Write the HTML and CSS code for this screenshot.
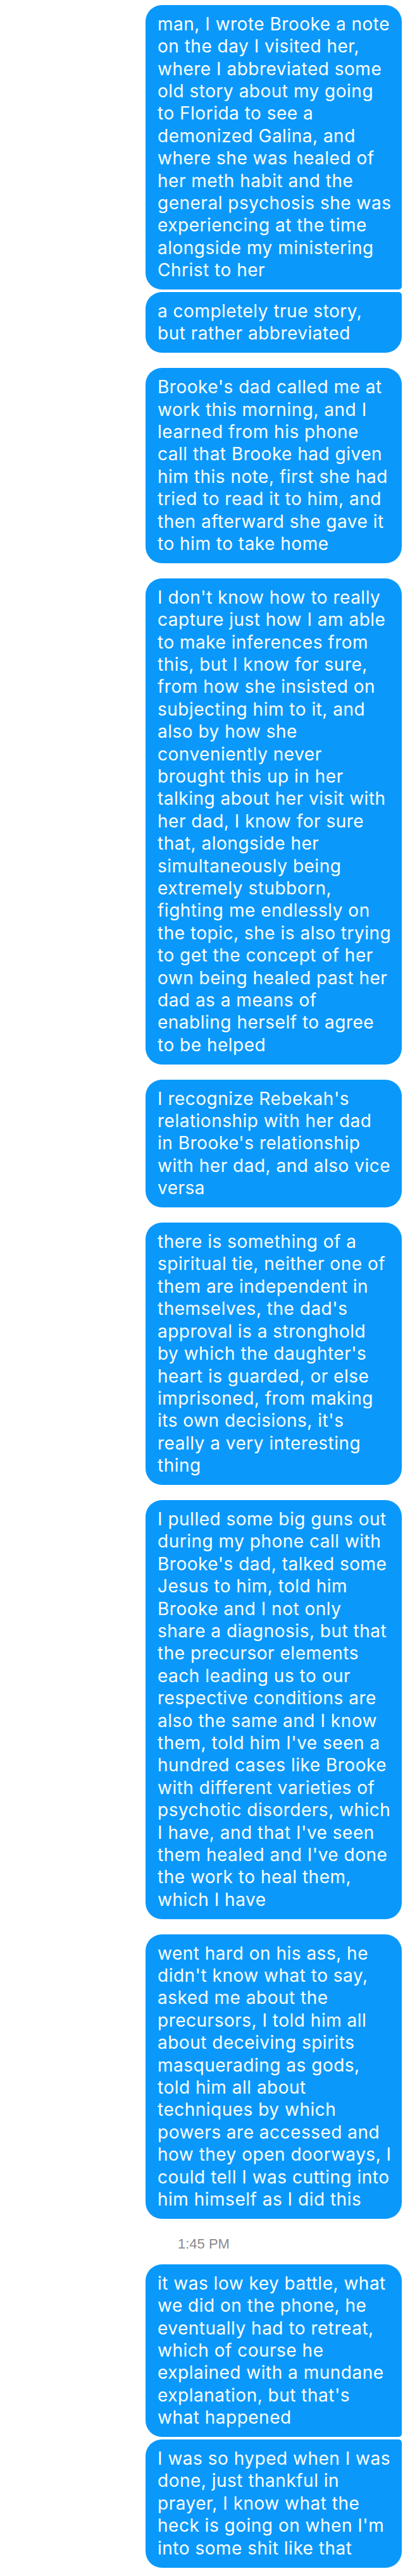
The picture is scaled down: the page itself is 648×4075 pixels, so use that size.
FILE: index.html
```html
<!DOCTYPE html>
<html lang="en">
<head>
<meta charset="utf-8">
<title>Messages</title>
<link rel="stylesheet" href="styles.css">
</head>
<body>
<main class="thread">
  <div class="group">
    <p class="bubble first">man, I wrote Brooke a note<br>on the day I visited her,<br>where I abbreviated some<br>old story about my going<br>to Florida to see a<br>demonized Galina, and<br>where she was healed of<br>her meth habit and the<br>general psychosis she was<br>experiencing at the time<br>alongside my ministering<br>Christ to her</p>
    <p class="bubble last">a completely true story,<br>but rather abbreviated</p>
  </div>
  <div class="group">
    <p class="bubble">Brooke's dad called me at<br>work this morning, and I<br>learned from his phone<br>call that Brooke had given<br>him this note, first she had<br>tried to read it to him, and<br>then afterward she gave it<br>to him to take home</p>
  </div>
  <div class="group">
    <p class="bubble">I don't know how to really<br>capture just how I am able<br>to make inferences from<br>this, but I know for sure,<br>from how she insisted on<br>subjecting him to it, and<br>also by how she<br>conveniently never<br>brought this up in her<br>talking about her visit with<br>her dad, I know for sure<br>that, alongside her<br>simultaneously being<br>extremely stubborn,<br>fighting me endlessly on<br>the topic, she is also trying<br>to get the concept of her<br>own being healed past her<br>dad as a means of<br>enabling herself to agree<br>to be helped</p>
  </div>
  <div class="group">
    <p class="bubble">I recognize Rebekah's<br>relationship with her dad<br>in Brooke's relationship<br>with her dad, and also vice<br>versa</p>
  </div>
  <div class="group">
    <p class="bubble">there is something of a<br>spiritual tie, neither one of<br>them are independent in<br>themselves, the dad's<br>approval is a stronghold<br>by which the daughter's<br>heart is guarded, or else<br>imprisoned, from making<br>its own decisions, it's<br>really a very interesting<br>thing</p>
  </div>
  <div class="group">
    <p class="bubble">I pulled some big guns out<br>during my phone call with<br>Brooke's dad, talked some<br>Jesus to him, told him<br>Brooke and I not only<br>share a diagnosis, but that<br>the precursor elements<br>each leading us to our<br>respective conditions are<br>also the same and I know<br>them, told him I've seen a<br>hundred cases like Brooke<br>with different varieties of<br>psychotic disorders, which<br>I have, and that I've seen<br>them healed and I've done<br>the work to heal them,<br>which I have</p>
  </div>
  <div class="group">
    <p class="bubble">went hard on his ass, he<br>didn't know what to say,<br>asked me about the<br>precursors, I told him all<br>about deceiving spirits<br>masquerading as gods,<br>told him all about<br>techniques by which<br>powers are accessed and<br>how they open doorways, I<br>could tell I was cutting into<br>him himself as I did this</p>
  </div>
  <div class="time">1:45 PM</div>
  <div class="group">
    <p class="bubble first">it was low key battle, what<br>we did on the phone, he<br>eventually had to retreat,<br>which of course he<br>explained with a mundane<br>explanation, but that's<br>what happened</p>
    <p class="bubble last">I was so hyped when I was<br>done, just thankful in<br>prayer, I know what the<br>heck is going on when I'm<br>into some shit like that</p>
  </div>
</main>
</body>
</html>
```
FILE: styles.css
```css
html, body {
  margin: 0;
  padding: 0;
  background: #ffffff;
}

.thread {
  display: flex;
  flex-direction: column;
  align-items: flex-end;
  padding: 8px 13px 0 0;
}

.group {
  display: flex;
  flex-direction: column;
  gap: 4px;
  margin-top: 24px;
}

.group:first-child {
  margin-top: 0;
}

.bubble {
  box-sizing: border-box;
  width: 405px;
  margin: 0;
  padding: 12.7px 6px 12.7px 19px;
  background: #0a99fb;
  color: #ffffff;
  font-family: "Inter", "Liberation Sans", sans-serif;
  font-size: 28px;
  line-height: 35.4px;
  letter-spacing: 0.5px;
  white-space: nowrap;
  overflow: hidden;
  border-radius: 26px;
}

.bubble.first {
  border-bottom-right-radius: 5px;
}

.bubble.last {
  border-top-right-radius: 5px;
}

.time {
  align-self: stretch;
  margin-top: 27px;
  padding-left: 281px;
  font-family: "Liberation Sans", Arial, sans-serif;
  font-size: 22px;
  line-height: 26px;
  color: #8a8a8e;
}

.time + .group {
  margin-top: 19px;
}
```
